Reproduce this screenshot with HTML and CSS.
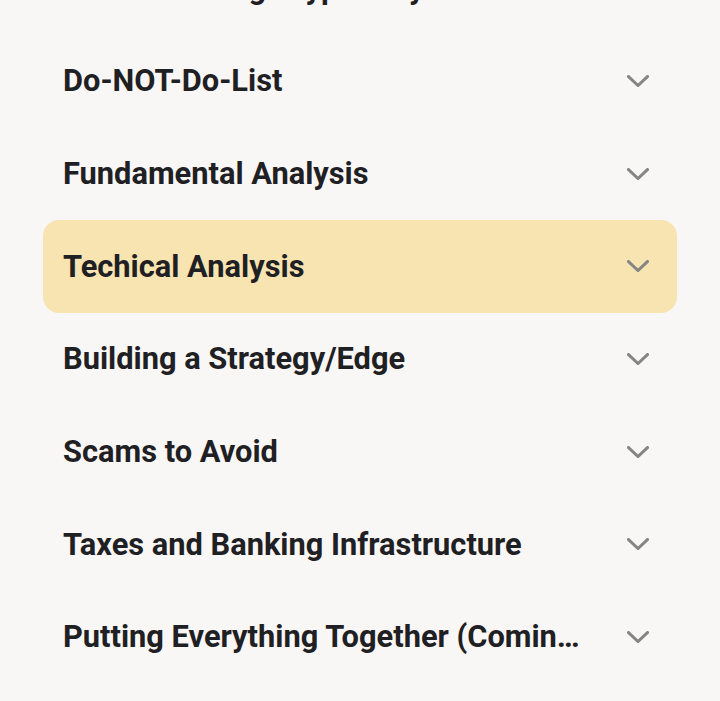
FILE: index.html
```html
<!DOCTYPE html>
<html lang="en">
<head>
<meta charset="utf-8">
<title>Course Sections</title>
<link rel="stylesheet" href="styles.css">
</head>
<body>
<ul class="sections">
  <li class="item"><span class="label">Understanding Crypto Keys</span><svg class="chev" viewBox="0 0 22 12"><path d="M1.5 1.5 L11 10.5 L20.5 1.5"/></svg></li>
  <li class="item"><span class="label">Do-NOT-Do-List</span><svg class="chev" viewBox="0 0 22 12"><path d="M1.5 1.5 L11 10.5 L20.5 1.5"/></svg></li>
  <li class="item"><span class="label">Fundamental Analysis</span><svg class="chev" viewBox="0 0 22 12"><path d="M1.5 1.5 L11 10.5 L20.5 1.5"/></svg></li>
  <li class="item active"><span class="label">Techical Analysis</span><svg class="chev" viewBox="0 0 22 12"><path d="M1.5 1.5 L11 10.5 L20.5 1.5"/></svg></li>
  <li class="item"><span class="label">Building a Strategy/Edge</span><svg class="chev" viewBox="0 0 22 12"><path d="M1.5 1.5 L11 10.5 L20.5 1.5"/></svg></li>
  <li class="item"><span class="label">Scams to Avoid</span><svg class="chev" viewBox="0 0 22 12"><path d="M1.5 1.5 L11 10.5 L20.5 1.5"/></svg></li>
  <li class="item"><span class="label">Taxes and Banking Infrastructure</span><svg class="chev" viewBox="0 0 22 12"><path d="M1.5 1.5 L11 10.5 L20.5 1.5"/></svg></li>
  <li class="item"><span class="label">Putting Everything Together (Coming Soon)</span><svg class="chev" viewBox="0 0 22 12"><path d="M1.5 1.5 L11 10.5 L20.5 1.5"/></svg></li>
</ul>
</body>
</html>
```

FILE: styles.css
```css
html, body {
  margin: 0;
  padding: 0;
  background: #f8f7f5;
  height: 100%;
  overflow: hidden;
}
body {
  font-family: Roboto, "Liberation Sans", sans-serif;
  color: #1f2023;
}
.sections {
  list-style: none;
  margin: -58px 0 0 43px;
  padding: 0;
  width: 634px;
  display: flex;
  flex-direction: column;
}
.item {
  height: 92.67px;
  box-sizing: border-box;
  display: flex;
  align-items: center;
  padding: 0 28px 0 20px;
  border-radius: 16px;
}
.item.active {
  background: #f7e4b0;
}
.label {
  flex: 1;
  min-width: 0;
  font-size: 30.8px;
  font-weight: 700;
  white-space: nowrap;
  overflow: hidden;
  text-overflow: ellipsis;
  margin-right: 40px;
}
.chev {
  width: 22px;
  height: 12px;
  flex: none;
  fill: none;
  stroke: #858585;
  stroke-width: 3;
  stroke-linecap: square;
  stroke-linejoin: miter;
}
```
